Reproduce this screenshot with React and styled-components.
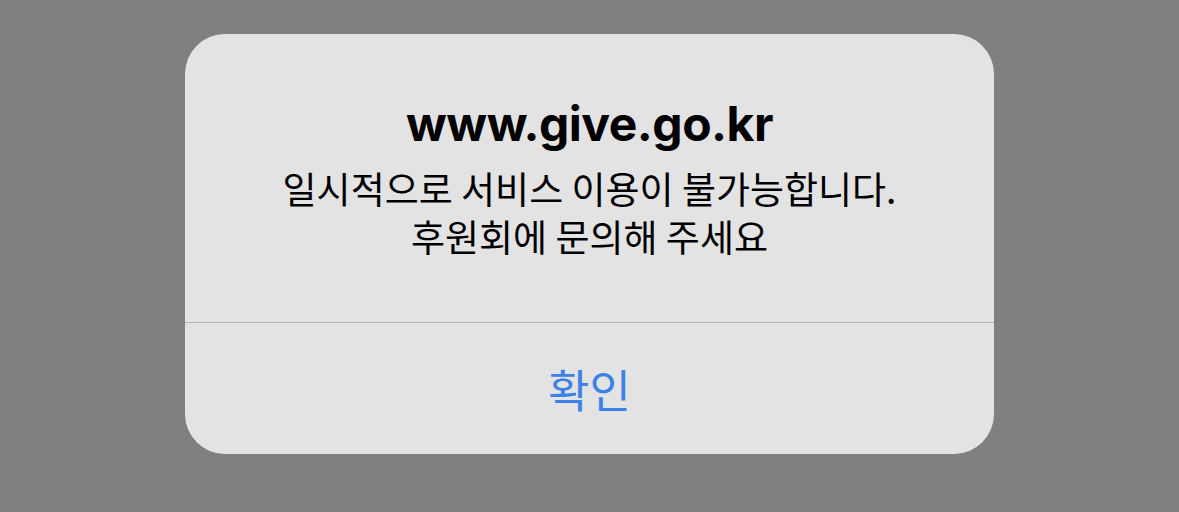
import React from "react";
import styled, { createGlobalStyle } from "styled-components";

const GlobalStyle = createGlobalStyle`
  html, body {
    margin: 0;
    padding: 0;
    background: #808080;
  }
  body {
    font-family: Inter, "Noto Sans CJK KR", sans-serif;
    -webkit-font-smoothing: antialiased;
  }
`;

const Screen = styled.div`
  width: 1179px;
  height: 512px;
  background: #808080;
  display: flex;
  justify-content: center;
  align-items: flex-start;
  padding-top: 34px;
  box-sizing: border-box;
`;

const Alert = styled.div`
  width: 809px;
  height: 420px;
  background: #e3e3e3;
  border-radius: 40px;
  display: flex;
  flex-direction: column;
  overflow: hidden;
`;

const Body = styled.div`
  height: 288px;
  box-sizing: border-box;
  padding-top: 61px;
  display: flex;
  flex-direction: column;
  align-items: center;
  text-align: center;
`;

const Title = styled.h1`
  margin: 0;
  font-family: Inter, "Noto Sans CJK KR", sans-serif;
  font-size: 48px;
  line-height: 58px;
  font-weight: 700;
  color: #000;
  letter-spacing: -0.5px;
`;

const Message = styled.p`
  margin: 11px 0 0;
  font-family: "Noto Sans CJK KR", sans-serif;
  font-size: 37px;
  line-height: 48px;
  font-weight: 400;
  color: #000;
`;

const Divider = styled.div`
  height: 1px;
  background: #b4b4b4;
`;

const Action = styled.button`
  flex: 1;
  border: none;
  background: transparent;
  font-family: "Noto Sans CJK KR", sans-serif;
  font-size: 45px;
  color: #3a82e6;
  padding: 0;
  cursor: pointer;
`;

export default function App() {
  return (
    <>
      <GlobalStyle />
      <Screen>
        <Alert>
          <Body>
            <Title>www.give.go.kr</Title>
            <Message>
              일시적으로 서비스 이용이 불가능합니다.
              <br />
              후원회에 문의해 주세요
            </Message>
          </Body>
          <Divider />
          <Action>확인</Action>
        </Alert>
      </Screen>
    </>
  );
}
